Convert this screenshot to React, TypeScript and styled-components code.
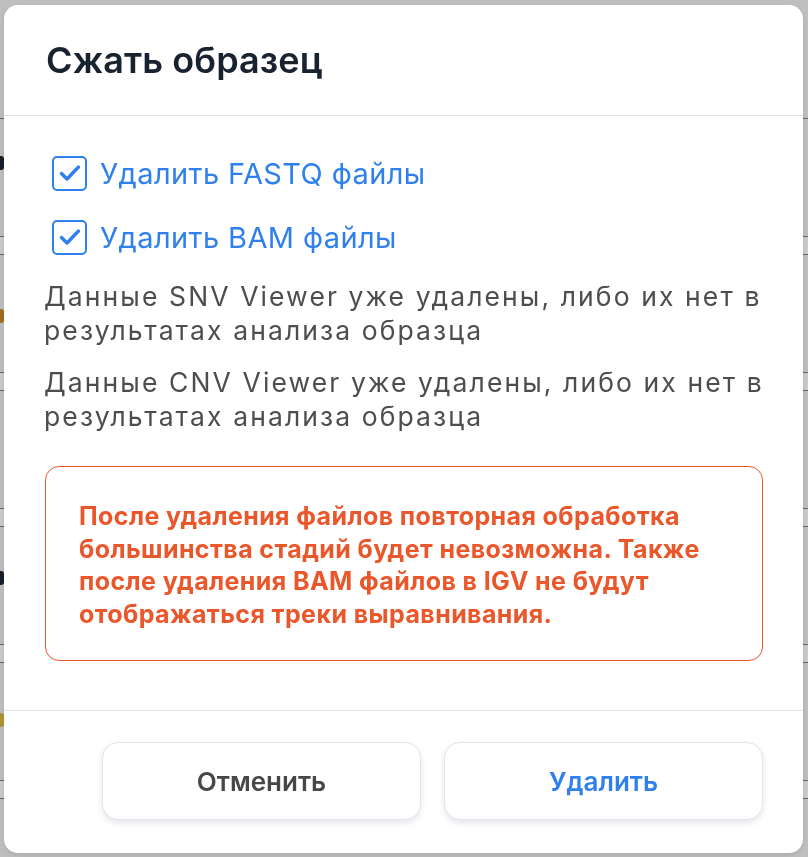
import React, { useState } from "react";
import styled, { createGlobalStyle } from "styled-components";

const GlobalStyle = createGlobalStyle`
  html, body {
    margin: 0;
    padding: 0;
    width: 808px;
    height: 857px;
    overflow: hidden;
    font-family: Inter, "Noto Sans", "Liberation Sans", sans-serif;
  }
`;

const colors = {
  title: "#19222f",
  blue: "#2f80ec",
  text: "#4d4d4d",
  orange: "#e9572b",
  border: "#e3e3ec",
};

// the page that stays dimmed behind the dialog
const Page = styled.div`
  background: #ececec;
  height: 857px;
  padding-top: 118px;
  box-sizing: border-box;
`;

const PageTop = styled.div`
  border-top: 1px solid #7d7d8e;
`;

const PageRow = styled.div`
  height: 136px;
  display: flex;
  flex-direction: column;
`;

const RowContent = styled.div<{ $offset: number }>`
  flex: 1;
  padding-top: ${(p) => p.$offset}px;
  box-sizing: border-box;
`;

const RowBand = styled.div`
  height: 17px;
  background: #fafafa;
  border-top: 1px solid #7d7d8e;
  border-bottom: 1px solid #7d7d8e;
`;

const Mark = styled.span<{ $tone: string }>`
  display: block;
  width: 4px;
  height: 14px;
  border-radius: 0 3px 3px 0;
  background: ${(p) => p.$tone};
`;

const Overlay = styled.div`
  position: fixed;
  inset: 0;
  background: rgba(0, 0, 0, 0.19);
  display: flex;
  padding: 5px 5px 4px 4px;
  box-sizing: border-box;
`;

const Dialog = styled.div`
  flex: 1;
  background: #fff;
  border-radius: 14px;
  display: flex;
  flex-direction: column;
  overflow: hidden;
  box-shadow: 0 2px 6px rgba(0, 0, 0, 0.12);
`;

const Header = styled.div`
  height: 111px;
  border-bottom: 1.5px solid ${colors.border};
  display: flex;
  align-items: center;
  padding: 0 42px;
  box-sizing: border-box;
`;

const Title = styled.h2`
  margin: 0;
  font-size: 36px;
  font-weight: 600;
  color: ${colors.title};
  letter-spacing: 0.1px;
`;

const Body = styled.div`
  flex: 1;
  padding: 25px 40px 0 40px;
  display: flex;
  flex-direction: column;
`;

const CheckRow = styled.label`
  display: flex;
  align-items: center;
  gap: 13px;
  height: 64px;
  padding-left: 8px;
  cursor: pointer;
  color: ${colors.blue};
  font-size: 29px;
  letter-spacing: 0.4px;
`;

const Box = styled.span`
  width: 31px;
  height: 31px;
  border: 2px solid ${colors.blue};
  border-radius: 5px;
  display: flex;
  align-items: center;
  justify-content: center;
  flex: 0 0 auto;
`;

const Notes = styled.div`
  margin: 10px -24px 0 0;
`;

const Note = styled.p`
  margin: 0;
  font-size: 26.5px;
  line-height: 34px;
  letter-spacing: 2.1px;
  color: ${colors.text};
  & + & {
    margin-top: 18px;
  }
`;

const Warning = styled.div`
  margin: 33px 0 0 1px;
  border: 1.5px solid ${colors.orange};
  border-radius: 14px;
  padding: 33px 30px 30px 33px;
  color: ${colors.orange};
  font-size: 25px;
  font-weight: 700;
  line-height: 32.5px;
  letter-spacing: 0.4px;
`;

const Footer = styled.div`
  height: 143px;
  border-top: 1.5px solid ${colors.border};
  display: flex;
  justify-content: flex-end;
  align-items: flex-start;
  gap: 23px;
  padding: 31px 40px 0 0;
  box-sizing: border-box;
`;

const Button = styled.button<{ $primary?: boolean }>`
  width: 319px;
  height: 78px;
  background: #fff;
  border: 1.5px solid #e2e4ee;
  border-radius: 16px;
  box-shadow: 0 3px 6px rgba(40, 50, 80, 0.12);
  font-family: inherit;
  font-size: 26px;
  font-weight: 600;
  color: ${(p) => (p.$primary ? colors.blue : "#474747")};
  cursor: pointer;
`;

const Check = () => (
  <svg width="24" height="24" viewBox="0 0 24 24" fill="none">
    <path
      d="M3.5 12.5l5.5 5.5L20.5 6"
      stroke={colors.blue}
      strokeWidth="3.4"
      strokeLinecap="round"
      strokeLinejoin="round"
    />
  </svg>
);

const options = [
  { id: "fastq", label: "Удалить FASTQ файлы" },
  { id: "bam", label: "Удалить BAM файлы" },
];

const notes = [
  "Данные SNV Viewer уже удалены, либо их нет в результатах анализа образца",
  "Данные CNV Viewer уже удалены, либо их нет в результатах анализа образца",
];

const pageRows = [
  { tone: "#1d2633", offset: 37 },
  { tone: "#c9872a", offset: 54 },
  { tone: "", offset: 0 },
  { tone: "#1d2633", offset: 44 },
  { tone: "#d8b640", offset: 50 },
];

export default function App() {
  const [checked, setChecked] = useState<Record<string, boolean>>({
    fastq: true,
    bam: true,
  });

  return (
    <>
      <GlobalStyle />
      <Page>
        <PageTop />
        {pageRows.map((r, i) => (
          <PageRow key={i}>
            <RowContent $offset={r.offset}>{r.tone && <Mark $tone={r.tone} />}</RowContent>
            <RowBand />
          </PageRow>
        ))}
      </Page>
      <Overlay>
        <Dialog>
          <Header>
            <Title>Сжать образец</Title>
          </Header>
          <Body>
            {options.map((o) => (
              <CheckRow
                key={o.id}
                onClick={() => setChecked({ ...checked, [o.id]: !checked[o.id] })}
              >
                <Box>{checked[o.id] && <Check />}</Box>
                {o.label}
              </CheckRow>
            ))}
            <Notes>
              {notes.map((n, i) => (
                <Note key={i}>{n}</Note>
              ))}
            </Notes>
            <Warning>
              После удаления файлов повторная обработка большинства стадий будет
              невозможна. Также после удаления BAM файлов в IGV не будут
              отображаться треки выравнивания.
            </Warning>
          </Body>
          <Footer>
            <Button>Отменить</Button>
            <Button $primary>Удалить</Button>
          </Footer>
        </Dialog>
      </Overlay>
    </>
  );
}
